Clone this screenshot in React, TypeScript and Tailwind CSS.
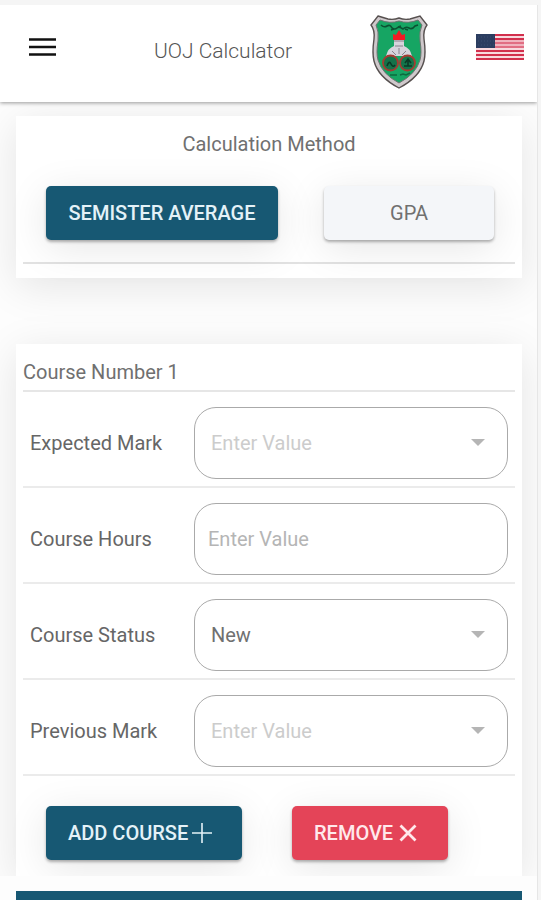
import { useState } from 'react'
import type { ReactNode } from 'react'
import clsx from 'clsx'

const raised = 'shadow-[0_2px_3px_rgba(0,0,0,0.3),0_8px_40px_rgba(0,0,0,0.1)]'
const panel = 'shadow-[0_8px_40px_rgba(0,0,0,0.1)]'

function Crest() {
  return (
    <svg viewBox="0 0 58 74" className="mb-1 h-[74px] w-[58px] shrink-0" role="img" aria-label="University crest">
      <path
        d="M8 1 L18 4 Q24 5 29 3 Q34 5 40 4 L50 1 L57 10 Q53 15 54 24 Q56 38 54 46 Q50 62 29 73 Q8 62 4 46 Q2 38 4 24 Q5 15 1 10 Z"
        fill="#cfc8cb"
        stroke="#56504f"
        strokeWidth="1.4"
      />
      <path
        d="M10 5 Q20 9 29 6 Q38 9 48 5 L52 10 Q49 16 50 26 Q52 38 50 45 Q46 59 29 68 Q12 59 8 45 Q6 38 8 26 Q9 16 6 10 Z"
        fill="#16a563"
        stroke="#6c7470"
        strokeWidth="1"
      />
      <path d="M11 10 q3 3 6 1 t5 2 q3 2 5 0 t6 1 q3 -3 6 -1 t6 -2 l3 -1" fill="none" stroke="#0b5132" strokeWidth="1.6" />
      <path d="M21 15 l3 -1 M28 12 l3 -1 M35 14 l3 1" stroke="#0b5132" strokeWidth="1.5" />
      <path d="M23 25 L23 19 L26 20 L29 15 L32 20 L35 19 L35 25 Z" fill="#f21a24" />
      <path d="M24 25 H34 L34 31 Q40 33 42 41 H16 Q18 33 24 31 Z" fill="#d6d3dc" />
      <path d="M24 26 h10 M25 31 h8 M22 36 l4 4 M36 36 l-4 4 M29 33 v6" stroke="#88808c" strokeWidth="1" />
      <circle cx="20.5" cy="48" r="7.5" fill="#14734a" stroke="#a53a32" strokeWidth="1.8" />
      <circle cx="37.5" cy="48" r="7.5" fill="#14734a" stroke="#a53a32" strokeWidth="1.8" />
      <path d="M17 51 q2 -6 4 -2 t4 1 M34 51 h8 M38 44 v7 M35 48 l3 -4 l3 4" fill="none" stroke="#0a3a26" strokeWidth="1.6" />
      <path d="M20 60 h7 M30 60 l3 -1 l3 1 l4 -2" fill="none" stroke="#0e6a3f" strokeWidth="1.6" />
    </svg>
  )
}

function Flag() {
  return (
    <svg viewBox="0 0 48 26" className="h-[26px] w-12" aria-hidden="true">
      <rect width="48" height="26" fill="#f8d9de" />
      {[0, 4, 8, 12, 16, 20, 24].map(y => (
        <rect key={y} y={y} width="48" height="2" fill="#d22f4c" />
      ))}
      <rect x="19" y="6" width="29" height="8" fill="#eb9aa8" opacity="0.6" />
      <rect width="19" height="14" fill="#2b3d60" />
      <path d="M2 3 H18 M2 7 H18 M2 11 H18" stroke="#3d4f70" strokeWidth="1" strokeDasharray="1 2" />
    </svg>
  )
}

function FieldRow({ id, label, children }: { id: string; label: string; children: ReactNode }) {
  return (
    <div className="flex items-center border-b-2 border-[#ebebeb] px-[7px] pt-[15px] pb-[7px]">
      <label htmlFor={id} className="w-[164px] shrink-0 text-[#666]">
        {label}
      </label>
      {children}
    </div>
  )
}

function SelectField({ id, options, placeholder }: { id: string; options: string[]; placeholder?: string }) {
  const [value, setValue] = useState(placeholder ? '' : options[0])

  return (
    <div className="relative min-w-0 flex-1">
      <select
        id={id}
        value={value}
        onChange={e => setValue(e.target.value)}
        className={clsx(
          'block h-[72px] w-full appearance-none rounded-[22px] border border-[#aaa] bg-white px-4',
          value ? 'text-[#707070]' : 'text-[#ccc]'
        )}
      >
        {placeholder && <option value="">{placeholder}</option>}
        {options.map(option => (
          <option key={option} value={option}>
            {option}
          </option>
        ))}
      </select>
      <svg
        viewBox="0 0 14 8"
        className="pointer-events-none absolute top-8 right-[23px] h-2 w-[14px]"
        aria-hidden="true"
      >
        <path d="M0 0 H14 L7 7 Z" fill="#b5b5b5" />
      </svg>
    </div>
  )
}

export default function App() {
  const [method, setMethod] = useState('semester')
  const marks = ['A', 'B', 'C', 'D', 'F']

  const methodStyle = (name: string) =>
    method === name ? 'bg-[#175873] text-[#e4f2f8]' : 'bg-[#f4f6f9] text-[#707070]'

  return (
    <div className="min-h-screen bg-[#f5f5f5] pt-[5px] pr-[3px] font-['Roboto','Liberation_Sans',sans-serif] text-[20px] leading-6 text-[#707070]">
      <div className="flex min-h-[calc(100vh-5px)] flex-col overflow-hidden border-r border-[#e6e6e6] bg-[#fdfdfd]">
        <header className="relative flex h-[97px] items-center bg-white pr-[13px] pl-7 shadow-[0_1px_4px_rgba(0,0,0,0.4)]">
          <button type="button" aria-label="Open menu" className="mb-[14px] shrink-0">
            <svg viewBox="0 0 28 20" className="h-5 w-7" aria-hidden="true">
              <path d="M1 2.5 H28 M1 10 H28 M1 17.5 H28" stroke="#111" strokeWidth="2.6" />
            </svg>
          </button>
          <h1 className="mb-[6px] flex-1 pl-5 text-center text-[21px] font-light text-[#555]">UOJ Calculator</h1>
          <Crest />
          <button type="button" aria-label="Change language" className="mb-[14px] ml-12 shrink-0">
            <Flag />
          </button>
        </header>

        <main className="pt-[14px] pr-[15px] pl-4">
          <section className={clsx('bg-white px-[7px] pt-4 pb-[14px]', panel)}>
            <h2 className="text-center">Calculation Method</h2>
            <div className="flex justify-between border-b-2 border-[#e2e2e2] pt-[30px] pr-[21px] pb-[22px] pl-[23px]">
              <button
                type="button"
                onClick={() => setMethod('semester')}
                className={clsx('h-[54px] w-[232px] rounded-[5px] font-medium', raised, methodStyle('semester'))}
              >
                SEMISTER AVERAGE
              </button>
              <button
                type="button"
                onClick={() => setMethod('gpa')}
                className={clsx('h-[54px] w-[170px] rounded-[5px]', raised, methodStyle('gpa'))}
              >
                GPA
              </button>
            </div>
          </section>

          <section className={clsx('mt-[66px] bg-white px-[7px] pt-4 pb-4', panel)}>
            <h2 className="border-b-2 border-[#e6e6e6] pb-[6px]">Course Number 1</h2>
            <FieldRow id="expected-mark" label="Expected Mark">
              <SelectField id="expected-mark" options={marks} placeholder="Enter Value" />
            </FieldRow>
            <FieldRow id="course-hours" label="Course Hours">
              <input
                id="course-hours"
                type="text"
                placeholder="Enter Value"
                className="h-[72px] min-w-0 flex-1 rounded-[22px] border border-[#aaa] bg-white px-[13px] placeholder:text-[#b5b5b5]"
              />
            </FieldRow>
            <FieldRow id="course-status" label="Course Status">
              <SelectField id="course-status" options={['New', 'Repeated']} />
            </FieldRow>
            <FieldRow id="previous-mark" label="Previous Mark">
              <SelectField id="previous-mark" options={marks} placeholder="Enter Value" />
            </FieldRow>
            <div className="flex gap-[50px] pt-[30px] pl-[23px]">
              <button
                type="button"
                className={clsx('flex h-[54px] w-[196px] items-center gap-1 rounded-[5px] bg-[#175873] pl-[22px] font-medium text-[#e4f2f8]', raised)}
              >
                ADD COURSE
                <svg viewBox="0 0 20 20" className="h-5 w-5 shrink-0" aria-hidden="true">
                  <path d="M0 10 H20 M10 0 V20" stroke="currentColor" strokeWidth="1.6" />
                </svg>
              </button>
              <button
                type="button"
                className={clsx('flex h-[54px] w-[156px] items-center gap-[6px] rounded-[5px] bg-[#e44458] pl-[22px] font-medium text-[#ffe9ec]', raised)}
              >
                REMOVE
                <svg viewBox="0 0 18 18" className="h-[18px] w-[18px] shrink-0" aria-hidden="true">
                  <path d="M1.5 1.5 L16.5 16.5 M16.5 1.5 L1.5 16.5" stroke="currentColor" strokeWidth="2.8" />
                </svg>
              </button>
            </div>
          </section>
        </main>

        <div className="relative flex flex-1 bg-[#fdfdfd] pt-[15px] pr-[15px] pl-4">
          <footer className="min-h-[9px] flex-1 bg-[#175873]" />
        </div>
      </div>
    </div>
  )
}
